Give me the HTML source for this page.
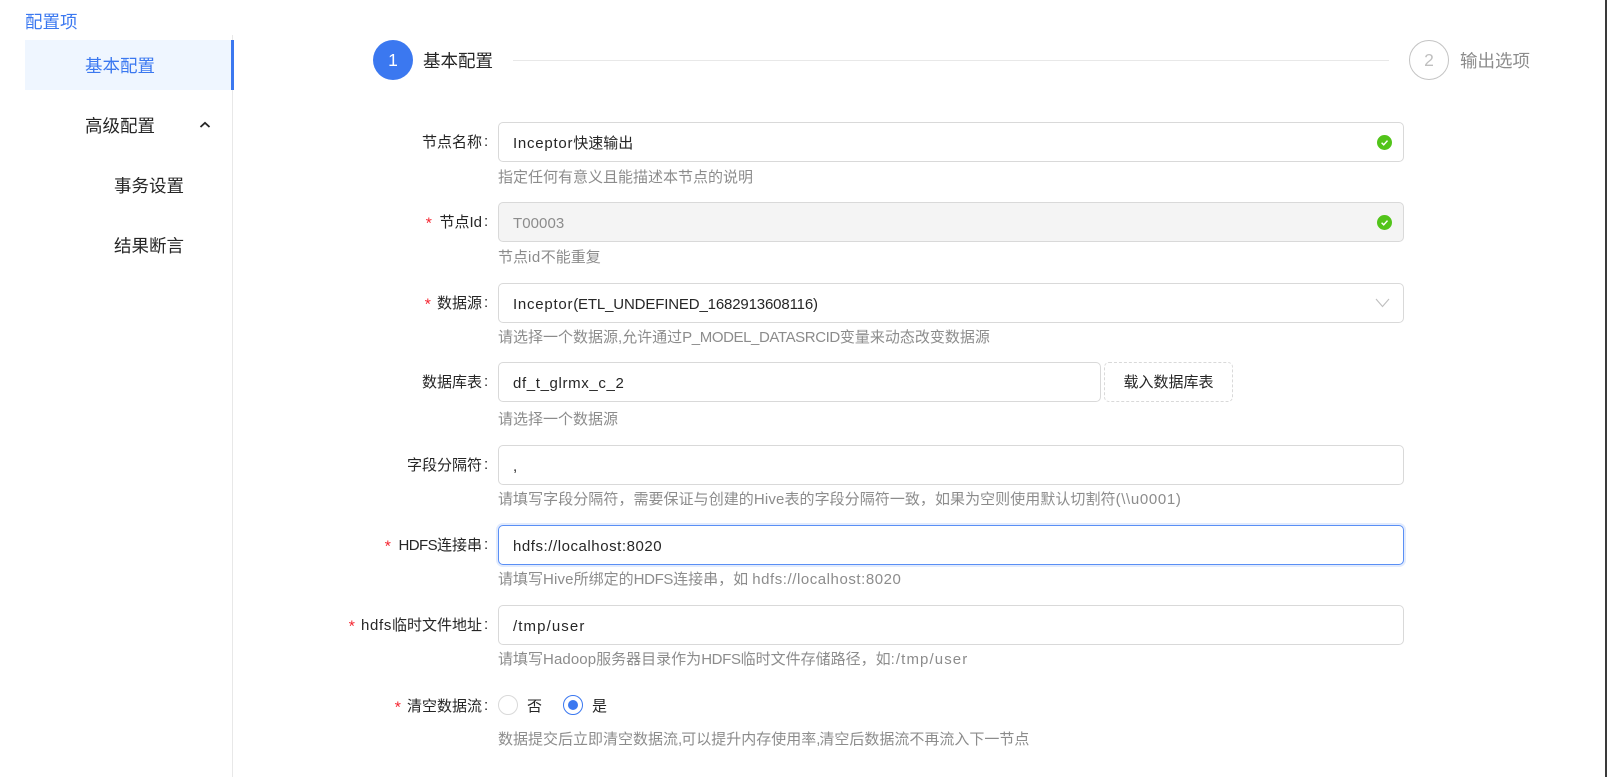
<!DOCTYPE html>
<html lang="zh-CN"><head><meta charset="utf-8"><title>配置项</title>
<style>
*{box-sizing:border-box}
html,body{margin:0;padding:0;width:1607px;height:777px;overflow:hidden;background:#fff}
body{position:relative;font-family:"Liberation Sans","Noto Sans CJK SC",sans-serif;font-size:15px;color:#262626}
.a{position:absolute;white-space:nowrap}
.t{position:absolute;white-space:nowrap;line-height:22px;height:22px}
.m{font-size:17.5px;line-height:26px;height:26px}
.lab{right:1125px;text-align:right;letter-spacing:0}
.col{position:absolute;left:484px;line-height:22px;color:#262626}
.star{position:absolute;color:#f5222d;font-family:"Liberation Mono",monospace;font-size:16px;line-height:22px}
.inp{position:absolute;left:498px;width:906px;height:40px;border:1px solid #d9d9d9;border-radius:5px;background:#fff}
.val{position:absolute;left:513px;white-space:nowrap;line-height:22px;letter-spacing:.55px;color:#262626}
.hint{position:absolute;left:498px;white-space:nowrap;line-height:20px;color:#8c8c8c;letter-spacing:0}
.ok{position:absolute;left:1377px;width:15px;height:15px}
</style></head><body>
<div class="a" style="left:1605px;top:0;width:2px;height:777px;background:#3a3a3a"></div>

<div class="t m" style="left:25px;top:9px;color:#3b78f0">配置项</div>
<div class="a" style="left:232px;top:35px;width:1px;height:742px;background:#e8e8e8"></div>
<div class="a" style="left:25px;top:40px;width:206px;height:50px;background:#eff6ff"></div>
<div class="a" style="left:231px;top:40px;width:3px;height:50px;background:#3b78f0"></div>
<div class="t m" style="left:85px;top:53px;color:#3b78f0">基本配置</div>
<div class="t m" style="left:85px;top:113px">高级配置</div>
<svg class="a" style="left:199px;top:120px" width="12" height="10" viewBox="0 0 12 10"><path d="M1.5 7 6 2.8 10.5 7" fill="none" stroke="#262626" stroke-width="1.8"/></svg>
<div class="t m" style="left:114px;top:173px">事务设置</div>
<div class="t m" style="left:114px;top:233px">结果断言</div>

<div class="a" style="left:373px;top:40px;width:40px;height:40px;border-radius:50%;background:#3b78f0;color:#fff;font-size:17.5px;line-height:40px;text-align:center">1</div>
<div class="t m" style="left:423px;top:48px">基本配置</div>
<div class="a" style="left:513px;top:60px;width:876px;height:1px;background:#e8e8e8"></div>
<div class="a" style="left:1409px;top:40px;width:40px;height:40px;border-radius:50%;border:1px solid #c4c4c4;color:#bfbfbf;font-size:17.5px;line-height:38px;text-align:center">2</div>
<div class="t m" style="left:1460px;top:48px;color:#8c8c8c">输出选项</div>

<div class="t lab" style="top:132px">节点名称</div><div class="col" style="top:131px">:</div>
<div class="inp" style="top:122px"></div>
<div class="val" style="top:133px;letter-spacing:.75px">Inceptor<span style="letter-spacing:0">快速输出</span></div>
<svg class="ok" style="top:135px" viewBox="0 0 15 15"><circle cx="7.5" cy="7.5" r="7.5" fill="#52c41a"/><path d="M4.6 7.7 6.7 9.8 10.5 5.6" fill="none" stroke="#fff" stroke-width="1.4"/></svg>
<div class="hint" style="top:168px">指定任何有意义且能描述本节点的说明</div>

<div class="star" style="left:424px;top:214px">*</div>
<div class="t lab" style="top:212px">节点Id</div><div class="col" style="top:211px">:</div>
<div class="inp" style="top:202px;background:#f4f4f4"></div>
<div class="val" style="top:213px;color:#8c8c8c;letter-spacing:.07px">T00003</div>
<svg class="ok" style="top:215px" viewBox="0 0 15 15"><circle cx="7.5" cy="7.5" r="7.5" fill="#52c41a"/><path d="M4.6 7.7 6.7 9.8 10.5 5.6" fill="none" stroke="#fff" stroke-width="1.4"/></svg>
<div class="hint" style="top:248px">节点<span style="letter-spacing:.5px">id</span>不能重复</div>

<div class="star" style="left:423px;top:295px">*</div>
<div class="t lab" style="top:293px">数据源</div><div class="col" style="top:292px">:</div>
<div class="inp" style="top:283px"></div>
<div class="val" style="top:294px;letter-spacing:.75px">Inceptor<span style="letter-spacing:-.15px">(ETL_UNDEFINED_1682913608116)</span></div>
<svg class="a" style="left:1375px;top:297px" width="15" height="12" viewBox="0 0 15 12"><path d="M1 2 7.5 9.5 14 2" fill="none" stroke="#bfbfbf" stroke-width="1.1"/></svg>
<div class="hint" style="top:328px">请选择一个数据源,允许通过<span style="letter-spacing:-.4px">P_MODEL_DATASRCID</span>变量来动态改变数据源</div>

<div class="t lab" style="top:372px">数据库表</div><div class="col" style="top:371px">:</div>
<div class="inp" style="top:362px;width:603px"></div>
<div class="val" style="top:373px;letter-spacing:.64px">df_t_glrmx_c_2</div>
<div class="a" style="left:1104px;top:362px;width:129px;height:40px;border:1px dashed #d9d9d9;border-radius:5px;text-align:center;line-height:39px">载入数据库表</div>
<div class="hint" style="top:410px">请选择一个数据源</div>

<div class="t lab" style="top:455px">字段分隔符</div><div class="col" style="top:454px">:</div>
<div class="inp" style="top:445px"></div>
<div class="val" style="top:456px">,</div>
<div class="hint" style="top:490px;letter-spacing:.05px">请填写字段分隔符，需要保证与创建的<span style="letter-spacing:.15px">Hive</span>表的字段分隔符一致，如果为空则使用默认切割符<span style="letter-spacing:.65px">(\\u0001)</span></div>

<div class="star" style="left:383px;top:537px">*</div>
<div class="t lab" style="top:535px"><span style="letter-spacing:-.6px">HDFS</span>连接串</div><div class="col" style="top:534px">:</div>
<div class="inp" style="top:525px;border-color:#5a8ff5;box-shadow:0 0 0 2px rgba(59,120,240,.15)"></div>
<div class="val" style="top:536px">hdfs://localhost:8020</div>
<div class="hint" style="top:570px">请填写<span style="letter-spacing:.15px">Hive</span>所绑定的<span style="letter-spacing:-.35px">HDFS</span>连接串，如 <span style="letter-spacing:.55px">hdfs://localhost:8020</span></div>

<div class="star" style="left:347px;top:617px">*</div>
<div class="t lab" style="top:615px"><span style="letter-spacing:.65px">hdfs</span>临时文件地址</div><div class="col" style="top:614px">:</div>
<div class="inp" style="top:605px"></div>
<div class="val" style="top:616px;letter-spacing:1.1px">/tmp/user</div>
<div class="hint" style="top:650px">请填写<span style="letter-spacing:.1px">Hadoop</span>服务器目录作为<span style="letter-spacing:-.35px">HDFS</span>临时文件存储路径，如<span style="letter-spacing:1.1px">:/tmp/user</span></div>

<div class="star" style="left:393px;top:698px">*</div>
<div class="t lab" style="top:696px">清空数据流</div><div class="col" style="top:695px">:</div>
<div class="a" style="left:498px;top:695px;width:20px;height:20px;border:1px solid #d9d9d9;border-radius:50%"></div>
<div class="t" style="left:527px;top:696px">否</div>
<div class="a" style="left:563px;top:695px;width:20px;height:20px;border:1px solid #3b78f0;border-radius:50%"></div>
<div class="a" style="left:568px;top:700px;width:10px;height:10px;background:#3b78f0;border-radius:50%"></div>
<div class="t" style="left:592px;top:696px">是</div>
<div class="hint" style="top:730px">数据提交后立即清空数据流<span style="letter-spacing:-1px">,</span>可以提升内存使用率<span style="letter-spacing:-1px">,</span>清空后数据流不再流入下一节点</div>
</body></html>
